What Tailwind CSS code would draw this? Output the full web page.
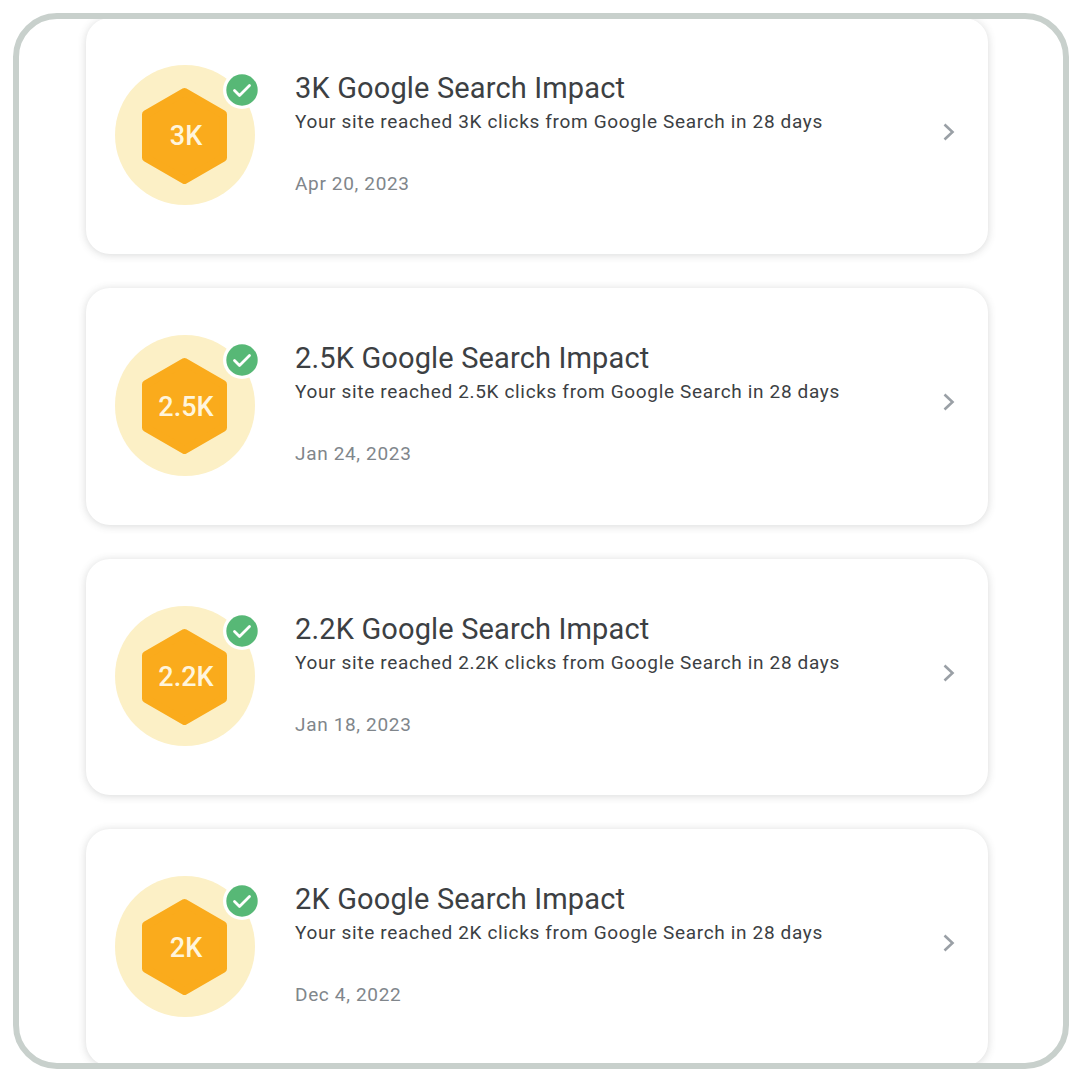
<!DOCTYPE html>
<html lang="en">
<head>
    <meta charset="UTF-8">
    <title>Milestones</title>
    <script src="https://cdn.jsdelivr.net/npm/@tailwindcss/browser@4"></script>
</head>
<body class="bg-white">

    <!-- Frame -->
    <div class="w-[1056px] h-[1056px] mt-[13px] ml-[13px] border-[6px] border-[#c8d0cc] rounded-[44px] overflow-hidden bg-white">
        <div class="flex flex-col gap-[34px] pl-[67px] -mt-[1.5px]">

            <!-- 3K -->
            <div class="flex items-start w-[902px] h-[236.5px] shrink-0 bg-white rounded-[24px] shadow-[0_1px_8px_rgba(60,64,67,0.2)]">
                <div class="relative flex items-center justify-center w-[140.5px] h-[140.5px] shrink-0 mt-[47px] ml-[28.75px] rounded-full bg-[#fcf0c6]">
                    <svg class="absolute left-[27.5px] top-[23px] w-[85px] h-[96px]" viewBox="0 0 86 97"><polygon points="43,4 82,26.5 82,70.5 43,93 4,70.5 4,26.5" fill="#faab1c" stroke="#faab1c" stroke-width="8" stroke-linejoin="round"/></svg>
                    <span class="relative pt-[3px] pl-[2px] font-['Roboto',sans-serif] text-[27px] font-medium text-[#fff5dc]">3K</span>
                    <svg class="absolute left-[108.25px] top-[6px] w-[38px] h-[38px]" viewBox="0 0 38 38"><circle cx="19" cy="19" r="19" fill="#fff"/><circle cx="19" cy="19" r="15.7" fill="#57b876"/><path d="M11.5 19.5l5 5 10-10" fill="none" stroke="#fff" stroke-width="2.8" stroke-linecap="round" stroke-linejoin="round"/></svg>
                </div>
                <div class="flex flex-col ml-[39.75px] mt-[50px] flex-1">
                    <h2 class="font-['Roboto',sans-serif] text-[29px] leading-[40px] font-[450] tracking-[0.15px] text-[#3c4043]">3K Google Search Impact</h2>
                    <p class="font-['Roboto',sans-serif] text-[19px] leading-[28px] tracking-[0.66px] text-[#3c4043]">Your site reached 3K clicks from Google Search in 28 days</p>
                    <p class="mt-[34px] font-['Roboto',sans-serif] text-[19px] leading-[28px] tracking-[0.66px] text-[#80868b]">Apr 20, 2023</p>
                </div>
                <svg class="w-[16px] h-[20px] mt-[104px] mr-[31px]" viewBox="0 0 16 20"><path d="M3.5 2.5l8 7.5-8 7.5" fill="none" stroke="#9aa0a6" stroke-width="2.6"/></svg>
            </div>

            <!-- 2.5K -->
            <div class="flex items-start w-[902px] h-[236.5px] shrink-0 bg-white rounded-[24px] shadow-[0_1px_8px_rgba(60,64,67,0.2)]">
                <div class="relative flex items-center justify-center w-[140.5px] h-[140.5px] shrink-0 mt-[47px] ml-[28.75px] rounded-full bg-[#fcf0c6]">
                    <svg class="absolute left-[27.5px] top-[23px] w-[85px] h-[96px]" viewBox="0 0 86 97"><polygon points="43,4 82,26.5 82,70.5 43,93 4,70.5 4,26.5" fill="#faab1c" stroke="#faab1c" stroke-width="8" stroke-linejoin="round"/></svg>
                    <span class="relative pt-[3px] pl-[2px] font-['Roboto',sans-serif] text-[27px] font-medium text-[#fff5dc]">2.5K</span>
                    <svg class="absolute left-[108.25px] top-[6px] w-[38px] h-[38px]" viewBox="0 0 38 38"><circle cx="19" cy="19" r="19" fill="#fff"/><circle cx="19" cy="19" r="15.7" fill="#57b876"/><path d="M11.5 19.5l5 5 10-10" fill="none" stroke="#fff" stroke-width="2.8" stroke-linecap="round" stroke-linejoin="round"/></svg>
                </div>
                <div class="flex flex-col ml-[39.75px] mt-[50px] flex-1">
                    <h2 class="font-['Roboto',sans-serif] text-[29px] leading-[40px] font-[450] tracking-[0.15px] text-[#3c4043]">2.5K Google Search Impact</h2>
                    <p class="font-['Roboto',sans-serif] text-[19px] leading-[28px] tracking-[0.66px] text-[#3c4043]">Your site reached 2.5K clicks from Google Search in 28 days</p>
                    <p class="mt-[34px] font-['Roboto',sans-serif] text-[19px] leading-[28px] tracking-[0.66px] text-[#80868b]">Jan 24, 2023</p>
                </div>
                <svg class="w-[16px] h-[20px] mt-[104px] mr-[31px]" viewBox="0 0 16 20"><path d="M3.5 2.5l8 7.5-8 7.5" fill="none" stroke="#9aa0a6" stroke-width="2.6"/></svg>
            </div>

            <!-- 2.2K -->
            <div class="flex items-start w-[902px] h-[236.5px] shrink-0 bg-white rounded-[24px] shadow-[0_1px_8px_rgba(60,64,67,0.2)]">
                <div class="relative flex items-center justify-center w-[140.5px] h-[140.5px] shrink-0 mt-[47px] ml-[28.75px] rounded-full bg-[#fcf0c6]">
                    <svg class="absolute left-[27.5px] top-[23px] w-[85px] h-[96px]" viewBox="0 0 86 97"><polygon points="43,4 82,26.5 82,70.5 43,93 4,70.5 4,26.5" fill="#faab1c" stroke="#faab1c" stroke-width="8" stroke-linejoin="round"/></svg>
                    <span class="relative pt-[3px] pl-[2px] font-['Roboto',sans-serif] text-[27px] font-medium text-[#fff5dc]">2.2K</span>
                    <svg class="absolute left-[108.25px] top-[6px] w-[38px] h-[38px]" viewBox="0 0 38 38"><circle cx="19" cy="19" r="19" fill="#fff"/><circle cx="19" cy="19" r="15.7" fill="#57b876"/><path d="M11.5 19.5l5 5 10-10" fill="none" stroke="#fff" stroke-width="2.8" stroke-linecap="round" stroke-linejoin="round"/></svg>
                </div>
                <div class="flex flex-col ml-[39.75px] mt-[50px] flex-1">
                    <h2 class="font-['Roboto',sans-serif] text-[29px] leading-[40px] font-[450] tracking-[0.15px] text-[#3c4043]">2.2K Google Search Impact</h2>
                    <p class="font-['Roboto',sans-serif] text-[19px] leading-[28px] tracking-[0.66px] text-[#3c4043]">Your site reached 2.2K clicks from Google Search in 28 days</p>
                    <p class="mt-[34px] font-['Roboto',sans-serif] text-[19px] leading-[28px] tracking-[0.66px] text-[#80868b]">Jan 18, 2023</p>
                </div>
                <svg class="w-[16px] h-[20px] mt-[104px] mr-[31px]" viewBox="0 0 16 20"><path d="M3.5 2.5l8 7.5-8 7.5" fill="none" stroke="#9aa0a6" stroke-width="2.6"/></svg>
            </div>

            <!-- 2K -->
            <div class="flex items-start w-[902px] h-[236.5px] shrink-0 bg-white rounded-[24px] shadow-[0_1px_8px_rgba(60,64,67,0.2)]">
                <div class="relative flex items-center justify-center w-[140.5px] h-[140.5px] shrink-0 mt-[47px] ml-[28.75px] rounded-full bg-[#fcf0c6]">
                    <svg class="absolute left-[27.5px] top-[23px] w-[85px] h-[96px]" viewBox="0 0 86 97"><polygon points="43,4 82,26.5 82,70.5 43,93 4,70.5 4,26.5" fill="#faab1c" stroke="#faab1c" stroke-width="8" stroke-linejoin="round"/></svg>
                    <span class="relative pt-[3px] pl-[2px] font-['Roboto',sans-serif] text-[27px] font-medium text-[#fff5dc]">2K</span>
                    <svg class="absolute left-[108.25px] top-[6px] w-[38px] h-[38px]" viewBox="0 0 38 38"><circle cx="19" cy="19" r="19" fill="#fff"/><circle cx="19" cy="19" r="15.7" fill="#57b876"/><path d="M11.5 19.5l5 5 10-10" fill="none" stroke="#fff" stroke-width="2.8" stroke-linecap="round" stroke-linejoin="round"/></svg>
                </div>
                <div class="flex flex-col ml-[39.75px] mt-[50px] flex-1">
                    <h2 class="font-['Roboto',sans-serif] text-[29px] leading-[40px] font-[450] tracking-[0.15px] text-[#3c4043]">2K Google Search Impact</h2>
                    <p class="font-['Roboto',sans-serif] text-[19px] leading-[28px] tracking-[0.66px] text-[#3c4043]">Your site reached 2K clicks from Google Search in 28 days</p>
                    <p class="mt-[34px] font-['Roboto',sans-serif] text-[19px] leading-[28px] tracking-[0.66px] text-[#80868b]">Dec 4, 2022</p>
                </div>
                <svg class="w-[16px] h-[20px] mt-[104px] mr-[31px]" viewBox="0 0 16 20"><path d="M3.5 2.5l8 7.5-8 7.5" fill="none" stroke="#9aa0a6" stroke-width="2.6"/></svg>
            </div>

        </div>
    </div>

</body>
</html>
